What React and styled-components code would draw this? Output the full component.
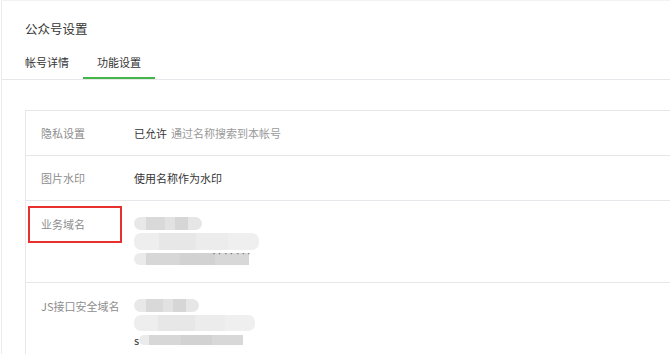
import React from "react";
import styled, { createGlobalStyle } from "styled-components";

const GlobalStyle = createGlobalStyle`
	html, body {
		margin: 0;
		padding: 0;
		background: #fff;
		overflow: hidden;
	}
	body {
		font-family: "Noto Sans CJK SC", "Noto Sans", "Liberation Sans", sans-serif;
		color: #353535;
	}
`;

const Panel = styled.div`
	margin-left: 1px;
	min-height: 354px;
	border-left: 1px solid #ececef;
	border-top: 1px solid #f2f2f4;
`;

const Title = styled.h2`
	margin: 0;
	padding: 18px 0 0 23px;
	font-size: 12.5px;
	font-weight: normal;
	line-height: 20px;
	color: #353535;
`;

const TabBar = styled.div`
	display: flex;
	margin-top: 9px;
	padding-left: 9px;
	border-bottom: 1px solid #e7e7eb;
`;

const Tab = styled.div`
	padding: 4px 14px 5px;
	font-size: 11px;
	line-height: 20px;
	color: #353535;
	border-bottom: 2px solid ${(p) => (p.$active ? "#44b549" : "transparent")};
`;

const Card = styled.div`
	margin: 30px -40px 0 23px;
	border: 1px solid #e7e7eb;
	border-bottom: none;
`;

const Row = styled.div`
	position: relative;
	display: flex;
	padding: ${(p) => (p.$multi ? "13px 0 14px 15px" : "12px 0 12px 15px")};
	border-top: ${(p) => (p.$first ? "none" : "1px solid #e7e7eb")};
	font-size: 11px;
	line-height: 20px;
`;

const Label = styled.div`
	width: 93px;
	flex-shrink: 0;
	color: #8d8d8d;
`;

const Value = styled.div`
	color: #353535;
`;

const Hint = styled.span`
	margin-left: 4px;
	color: #9a9a9a;
`;

const Lines = styled.div`
	padding-top: 1px;
	display: flex;
	flex-direction: column;
`;

const Line = styled.div`
	position: relative;
	display: flex;
	align-items: center;
	height: 17.5px;
	color: #353535;
`;

const Blob = styled.span`
	display: inline-block;
	width: ${(p) => p.$w}px;
	height: ${(p) => p.$h}px;
	margin-left: ${(p) => p.$ml || 0}px;
	border-radius: ${(p) => (p.$square ? "7px 0 0 7px" : "7px")};
	background: ${(p) => p.$bg};
	filter: blur(0.6px);
`;

const Specks = styled.span`
	position: absolute;
	left: 77px;
	top: -1px;
	font-size: 6px;
	line-height: 10px;
	letter-spacing: -0.5px;
	white-space: nowrap;
	color: #666;
`;

const Mark = styled.div`
	position: absolute;
	left: 2px;
	top: 5px;
	width: 94px;
	height: 37px;
	box-sizing: border-box;
	border: 2px solid #e8302e;
`;

const mosaicA =
	"linear-gradient(90deg, #e8e8e8 0 18%, #d9d9d9 18% 45%, #e2e2e2 45% 60%, #d6d6d6 60% 80%, #e6e6e6 80%)";
const mosaicB =
	"linear-gradient(90deg, #eeeeee 0 20%, #e7e7e7 20% 50%, #ececec 50% 75%, #efefef 75%)";
const mosaicC =
	"linear-gradient(90deg, #ebebeb 0 10%, #d7d7d7 10% 40%, #d2d2d2 40% 70%, #d8d8d8 70%)";

export default function App() {
	return (
		<>
			<GlobalStyle />
			<Panel>
				<Title>公众号设置</Title>
				<TabBar>
					<Tab>帐号详情</Tab>
					<Tab $active>功能设置</Tab>
				</TabBar>
				<Card>
					<Row $first>
						<Label>隐私设置</Label>
						<Value>
							已允许<Hint>通过名称搜索到本帐号</Hint>
						</Value>
					</Row>
					<Row>
						<Label>图片水印</Label>
						<Value>使用名称作为水印</Value>
					</Row>
					<Row $multi>
						<Mark />
						<Label>业务域名</Label>
						<Lines>
							<Line>
								<Blob $w={68} $h={13} $bg={mosaicA} />
							</Line>
							<Line>
								<Blob $w={125} $h={17} $bg={mosaicB} />
							</Line>
							<Line>
								<Blob $w={115} $h={12} $bg={mosaicC} $square />
								<Specks>·· ·· ···</Specks>
							</Line>
						</Lines>
					</Row>
					<Row $multi>
						<Label>JS接口安全域名</Label>
						<Lines>
							<Line>
								<Blob $w={65} $h={13} $bg={mosaicA} />
							</Line>
							<Line>
								<Blob $w={121} $h={16} $bg={mosaicB} />
							</Line>
							<Line>
								s<Blob $w={104} $h={10} $bg={mosaicC} $square />
							</Line>
						</Lines>
					</Row>
				</Card>
			</Panel>
		</>
	);
}
